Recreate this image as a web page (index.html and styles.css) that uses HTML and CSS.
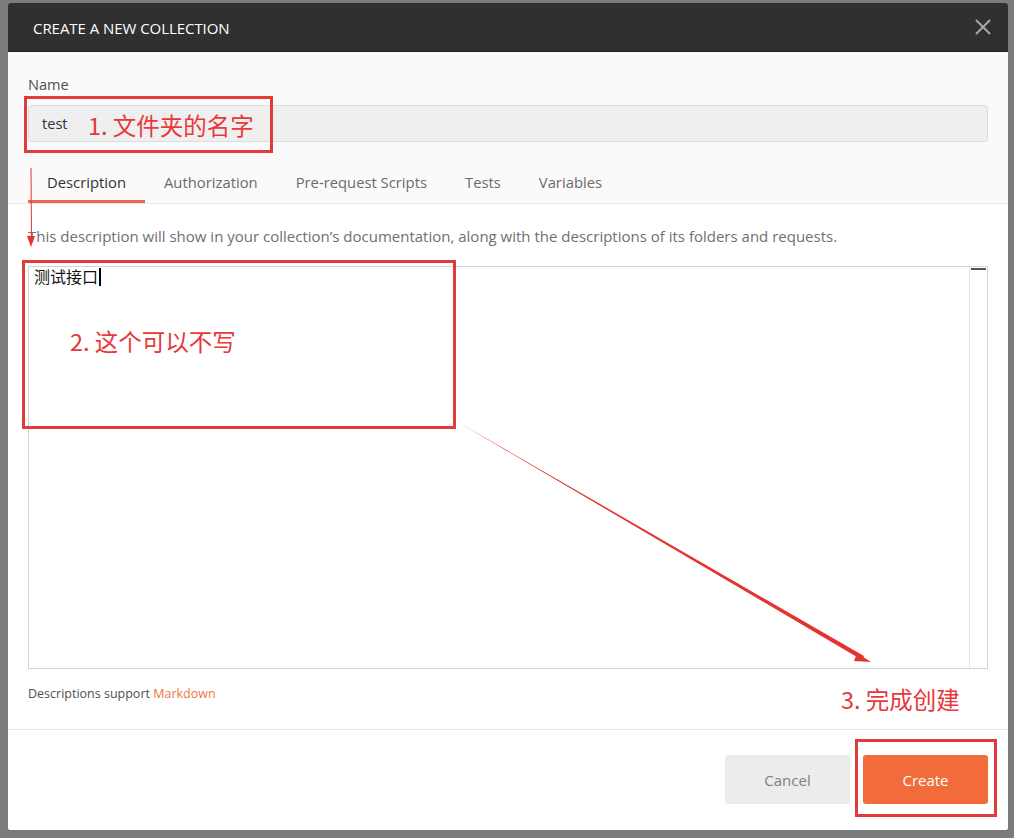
FILE: index.html
```html
<!DOCTYPE html>
<html lang="en">
<head>
<meta charset="utf-8">
<title>Create a new collection</title>
<link rel="stylesheet" href="styles.css">
</head>
<body>
<div class="page">
  <div class="dialog">
    <div class="dlg-header">
      <div class="dlg-title">CREATE A NEW COLLECTION</div>
      <svg class="close" width="18" height="18" viewBox="0 0 18 18"><path d="M2 2 L16 16 M16 2 L2 16" stroke="#a8a8a8" stroke-width="2" fill="none"/></svg>
    </div>
    <div class="dlg-top">
      <label class="field-label">Name</label>
      <div class="name-input">test</div>
      <div class="tabs">
        <div class="tab active">Description</div>
        <div class="tab">Authorization</div>
        <div class="tab">Pre-request Scripts</div>
        <div class="tab">Tests</div>
        <div class="tab">Variables</div>
      </div>
    </div>
    <div class="dlg-body">
      <p class="hint">This description will show in your collection’s documentation, along with the descriptions of its folders and requests.</p>
      <div class="editor">
        <div class="editor-text">测试接口<span class="caret"></span></div>
        <div class="scrollbar"><div class="thumb"></div></div>
      </div>
      <p class="md-note">Descriptions support <span class="md-link">Markdown</span></p>
    </div>
    <div class="dlg-footer">
      <button class="btn btn-cancel">Cancel</button>
      <button class="btn btn-create">Create</button>
    </div>
  </div>

  <svg class="annot" width="1014" height="838" viewBox="0 0 1014 838">
    <g fill="none" stroke="#e23b3b" stroke-width="3">
      <rect x="25.5" y="97.5" width="246" height="54"/>
      <rect x="23.5" y="261.5" width="431" height="166"/>
      <rect x="856.5" y="740.5" width="139" height="75"/>
    </g>
    <g fill="#e8383b" font-family="'Noto Sans CJK SC', sans-serif" font-size="23.5">
      <text x="88" y="134.5">1. 文件夹的名字</text>
      <text x="70" y="350.5">2. 这个可以不写</text>
      <text x="841" y="708.5">3. 完成创建</text>
    </g>
    <g fill="#e5332f">
      <polygon points="30.5,168 31.5,168 32,238 31,238"/>
      <polygon points="27,236 35,236 31,247"/>
      <polygon points="463,425 464,425.6 864,656 862,660"/>
      <polygon points="857,653 871,662 854,661"/>
    </g>
  </svg>
</div>
</body>
</html>
```

FILE: styles.css
```css
* { box-sizing: border-box; }

html, body {
  margin: 0;
  padding: 0;
  background: #7b7b7b;
  font-family: "Open Sans", "Noto Sans CJK SC", sans-serif;
}

.page {
  position: relative;
  width: 1014px;
  height: 838px;
  padding: 3px 6px 0 8px;
  overflow: hidden;
}

.dialog {
  width: 1000px;
  height: 827px;
  background: #ffffff;
  display: flex;
  flex-direction: column;
  border-radius: 2px;
  overflow: hidden;
}

.dlg-header {
  height: 49px;
  background: #303030;
  border-bottom: 1px solid #262626;
  display: flex;
  align-items: center;
  justify-content: space-between;
  padding: 0 16px 0 25px;
  flex: none;
}

.dlg-title {
  color: #ffffff;
  font-size: 15px;
  letter-spacing: -0.05px;
  padding-top: 1px;
}

.close { display: block; margin-top: -1px; }

.dlg-top {
  background: #fafafa;
  padding: 22px 20px 0 20px;
  border-bottom: 1px solid #e8e8e8;
  flex: none;
}

.field-label {
  display: block;
  font-size: 14.6px;
  color: #505050;
  line-height: 20px;
  height: 20px;
  margin-bottom: 11px;
}

.name-input {
  height: 37px;
  background: #efefef;
  border: 1px solid #dcdcdc;
  border-radius: 3px;
  padding: 0 13px;
  font-size: 14.6px;
  color: #333;
  line-height: 35px;
  margin-bottom: 21px;
}

.tabs {
  display: flex;
  height: 40px;
}

.tab {
  padding: 0 19px;
  font-size: 14.8px;
  color: #6b6b6b;
  border-bottom: 3px solid transparent;
  height: 40px;
  line-height: 39px;
}

.tab.active {
  color: #333;
  border-bottom-color: #ef6a48;
}

.dlg-body {
  padding: 0 20px;
  flex: none;
  height: 525px;
}

.hint {
  margin: 22px 0 0 0;
  font-size: 15px;
  color: #707070;
  line-height: 20px;
  white-space: nowrap;
}

.editor {
  margin-top: 20px;
  height: 403px;
  border: 1px solid #d4d4d4;
  display: flex;
  background: #fff;
}

.editor-text {
  flex: 1;
  padding: 0 5px;
  font-size: 16px;
  color: #111;
  line-height: 18px;
  font-family: "Noto Sans CJK SC", sans-serif;
}

.caret {
  display: inline-block;
  width: 2px;
  height: 18px;
  background: #000;
  vertical-align: -3px;
  margin-left: 1px;
}

.scrollbar {
  width: 18px;
  border-left: 1px solid #e2e2e2;
  padding-top: 1px;
  flex: none;
}

.thumb {
  height: 2px;
  margin: 0 1px 0 1px;
  background: #555;
}

.md-note {
  margin: 16px 0 0 0;
  font-size: 12.5px;
  color: #505050;
  line-height: 18px;
}

.md-link { color: #f07442; }

.dlg-footer {
  flex: 1;
  border-top: 1px solid #e5e5e5;
  display: flex;
  justify-content: flex-end;
  align-items: flex-start;
  gap: 13px;
  padding: 25px 20px 0 20px;
}

.btn {
  width: 125px;
  height: 49px;
  border: none;
  border-radius: 3px;
  font-family: "Open Sans", sans-serif;
  font-size: 15px;
  cursor: pointer;
}

.btn-cancel {
  background: #ececec;
  color: #808080;
}

.btn-create {
  background: #f26b3a;
  color: #ffffff;
}

.annot {
  position: absolute;
  left: 0;
  top: 0;
  pointer-events: none;
}
```
